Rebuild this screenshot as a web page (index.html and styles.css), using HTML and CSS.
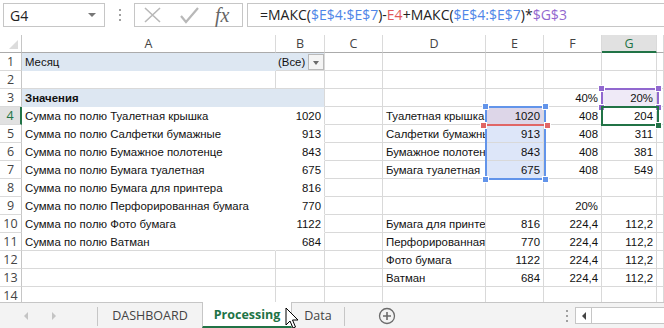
FILE: index.html
```html
<!DOCTYPE html>
<html lang="ru">
<head>
	<meta charset="UTF-8">
	<title>Processing</title>
	<link rel="stylesheet" href="styles.css">
</head>
<body>
	<div class="formula-bar">
		<div class="name-box"><span>G4</span><span class="caret"></span></div>
		<div class="grip"><i></i><i></i><i></i></div>
		<div class="fx-buttons">
			<svg class="btn-icon" width="36" height="22" viewBox="0 0 36 22"><path d="M10 4 L25 18 M25 4 L10 18" stroke="#b8b8b8" stroke-width="1.6" fill="none"/></svg>
			<svg class="btn-icon" width="36" height="22" viewBox="0 0 36 22"><path d="M10 12 L15 18 L27 4" stroke="#b8b8b8" stroke-width="2.2" fill="none"/></svg>
			<span class="fx">fx</span>
		</div>
		<div class="formula">=МАКС(<span class="ref-blue">$E$4:$E$7</span>)-<span class="ref-red">E4</span>+МАКС(<span class="ref-blue">$E$4:$E$7</span>)*<span class="ref-purple">$G$3</span></div>
	</div>

	<div class="sheet-area">
		<div class="sheet">
			<div class="c corner"></div>
			<div class="c ch">A</div><div class="c ch">B</div><div class="c ch">C</div><div class="c ch">D</div>
			<div class="c ch">E</div><div class="c ch">F</div><div class="c ch sel">G</div><div class="c ch"></div>

			<div class="c rh">1</div>
			<div class="c pa pvh">Месяц</div>
			<div class="c pvh filter"><span>(Все)</span><span class="drop"></span></div>
			<div class="c"></div><div class="c"></div><div class="c"></div><div class="c"></div><div class="c"></div><div class="c"></div>

			<div class="c rh">2</div>
			<div class="c"></div><div class="c"></div><div class="c"></div><div class="c"></div><div class="c"></div><div class="c"></div><div class="c"></div><div class="c"></div>

			<div class="c rh">3</div>
			<div class="c pa pvh bold">Значения</div>
			<div class="c pb pvh"></div>
			<div class="c"></div><div class="c"></div><div class="c"></div>
			<div class="c n">40%</div><div class="c n hl-purple">20%</div><div class="c"></div>

			<div class="c rh sel">4</div>
			<div class="c pa">Сумма по полю Туалетная крышка</div>
			<div class="c pb n">1020</div>
			<div class="c"></div><div class="c">Туалетная крышка</div>
			<div class="c n hl-mix">1020</div><div class="c n">408</div><div class="c n">204</div><div class="c"></div>

			<div class="c rh">5</div>
			<div class="c pa">Сумма по полю Салфетки бумажные</div>
			<div class="c pb n">913</div>
			<div class="c"></div><div class="c">Салфетки бумажные</div>
			<div class="c n hl-blue">913</div><div class="c n">408</div><div class="c n">311</div><div class="c"></div>

			<div class="c rh">6</div>
			<div class="c pa">Сумма по полю Бумажное полотенце</div>
			<div class="c pb n">843</div>
			<div class="c"></div><div class="c">Бумажное полотенце</div>
			<div class="c n hl-blue">843</div><div class="c n">408</div><div class="c n">381</div><div class="c"></div>

			<div class="c rh">7</div>
			<div class="c pa">Сумма по полю Бумага туалетная</div>
			<div class="c pb n">675</div>
			<div class="c"></div><div class="c">Бумага туалетная</div>
			<div class="c n hl-blue">675</div><div class="c n">408</div><div class="c n">549</div><div class="c"></div>

			<div class="c rh">8</div>
			<div class="c pa">Сумма по полю Бумага для принтера</div>
			<div class="c pb n">816</div>
			<div class="c"></div><div class="c"></div><div class="c"></div><div class="c"></div><div class="c"></div><div class="c"></div>

			<div class="c rh">9</div>
			<div class="c pa">Сумма по полю Перфорированная бумага</div>
			<div class="c pb n">770</div>
			<div class="c"></div><div class="c"></div><div class="c"></div>
			<div class="c n">20%</div><div class="c"></div><div class="c"></div>

			<div class="c rh">10</div>
			<div class="c pa">Сумма по полю Фото бумага</div>
			<div class="c pb n">1122</div>
			<div class="c"></div><div class="c">Бумага для принтера</div>
			<div class="c n">816</div><div class="c n">224,4</div><div class="c n">112,2</div><div class="c"></div>

			<div class="c rh">11</div>
			<div class="c pa last">Сумма по полю Ватман</div>
			<div class="c n">684</div>
			<div class="c"></div><div class="c">Перфорированная бумага</div>
			<div class="c n">770</div><div class="c n">224,4</div><div class="c n">112,2</div><div class="c"></div>

			<div class="c rh">12</div>
			<div class="c"></div><div class="c"></div><div class="c"></div><div class="c">Фото бумага</div>
			<div class="c n">1122</div><div class="c n">224,4</div><div class="c n">112,2</div><div class="c"></div>

			<div class="c rh">13</div>
			<div class="c"></div><div class="c"></div><div class="c"></div><div class="c">Ватман</div>
			<div class="c n">684</div><div class="c n">224,4</div><div class="c n">112,2</div><div class="c"></div>

			<div class="c rh">14</div>
			<div class="c"></div><div class="c"></div><div class="c"></div><div class="c"></div><div class="c"></div><div class="c"></div><div class="c"></div><div class="c"></div>
		</div>

		<!-- formula reference highlights and the active cell -->
		<div class="range range-blue">
			<span class="h tl"></span><span class="h tr"></span><span class="h bl"></span><span class="h br"></span>
		</div>
		<div class="range range-red">
			<span class="h bl"></span><span class="h br"></span>
		</div>
		<div class="range range-purple">
			<span class="h tl"></span><span class="h tr"></span><span class="h bl"></span><span class="h br"></span>
		</div>
		<div class="range active-cell"><span class="fill-handle"></span></div>
	</div>

	<div class="tabs">
		<div class="nav">
			<svg width="8" height="10" viewBox="0 0 8 10"><path d="M6 1 L2 5 L6 9 Z" fill="#c4c4c4"/></svg>
			<svg width="8" height="10" viewBox="0 0 8 10"><path d="M2 1 L6 5 L2 9 Z" fill="#c4c4c4"/></svg>
		</div>
		<div class="sep"></div>
		<div class="tab tab-dash">DASHBOARD</div>
		<div class="tab tab-active">Processing</div>
		<div class="tab tab-data">Data</div>
		<div class="sep"></div>
		<div class="add">
			<svg width="18" height="18" viewBox="0 0 18 18"><circle cx="9" cy="9" r="7.5" stroke="#6b6b6b" stroke-width="1.3" fill="none"/><path d="M9 5 V13 M5 9 H13" stroke="#6b6b6b" stroke-width="1.6"/></svg>
		</div>
		<div class="tabs-right">
			<div class="grip small"><i></i><i></i><i></i></div>
			<div class="hscroll"><span class="arrow-btn"><svg width="6" height="8" viewBox="0 0 6 8"><path d="M5 0 L1 4 L5 8 Z" fill="#444"/></svg></span></div>
		</div>
		<svg class="cursor" width="14" height="22" viewBox="0 0 14 22"><path d="M1 1 L1 18 L5 14 L8 21 L10.5 20 L7.5 13 L13 13 Z" fill="#fff" stroke="#000" stroke-width="1"/></svg>
	</div>
</body>
</html>
```

FILE: styles.css
```css
body {
	margin: 0;
	width: 664px;
	height: 328px;
	overflow: hidden;
	background: #fff;
	font-family: "Open Sans", "Noto Sans", sans-serif;
	color: #222;
}

/* formula bar */

.formula-bar {
	display: flex;
	height: 30px;
	padding: 3px 0 0 3px;
	box-sizing: border-box;
}

.name-box {
	width: 102px;
	height: 24px;
	box-sizing: border-box;
	border: 1px solid #c6c6c6;
	display: flex;
	align-items: center;
	justify-content: space-between;
	padding: 0 8px 0 6px;
	font-size: 14px;
}

.caret {
	width: 0;
	height: 0;
	border-left: 4px solid transparent;
	border-right: 4px solid transparent;
	border-top: 4px solid #777;
}

.grip {
	width: 29px;
	display: flex;
	flex-direction: column;
	align-items: center;
	justify-content: center;
	gap: 3px;
	height: 24px;
}

.grip i {
	width: 2px;
	height: 2px;
	background: #a0a0a0;
}

.fx-buttons {
	width: 109px;
	height: 24px;
	box-sizing: border-box;
	border: 1px solid #c6c6c6;
	display: flex;
	align-items: center;
	padding-left: 0;
}

.btn-icon {
	display: block;
}

.fx {
	font-family: "Liberation Serif", serif;
	font-style: italic;
	font-size: 20px;
	color: #666;
	margin-left: 8px;
	line-height: 20px;
}

.formula {
	flex: 1;
	height: 24px;
	box-sizing: border-box;
	margin-left: 4px;
	border: 1px solid #c6c6c6;
	border-right: none;
	padding-left: 12px;
	font-size: 14px;
	line-height: 22px;
	white-space: nowrap;
}

.ref-blue { color: #4f86e8; }
.ref-red { color: #e2595b; }
.ref-purple { color: #9168cf; }

/* sheet grid */

.sheet-area {
	position: relative;
	margin-top: 5px;
	height: 267px;
	overflow: hidden;
}

.sheet {
	display: grid;
	grid-template-columns: 22px 254px 49px 58px 103px 58px 58px 55px 7px;
	grid-auto-rows: 18px;
	font-family: "Liberation Sans", Arial, sans-serif;
	font-size: 11.4px;
	color: #111;
}

.c {
	box-sizing: border-box;
	border-right: 1px solid #d9d9d9;
	border-bottom: 1px solid #d9d9d9;
	padding: 0 3px;
	line-height: 18px;
	white-space: nowrap;
	overflow: hidden;
}

.n {
	text-align: right;
}

.bold {
	font-weight: bold;
}

.corner {
	position: relative;
	border-right-color: #c6c6c6;
	border-bottom-color: #ababab;
}

.corner::after {
	content: "";
	position: absolute;
	right: 3px;
	bottom: 3px;
	border-left: 9px solid transparent;
	border-bottom: 9px solid #dcdcdc;
}

.ch {
	text-align: center;
	color: #444;
	font-family: "Open Sans", "Noto Sans", sans-serif;
	font-size: 12.5px;
	border-bottom-color: #ababab;
	border-right-color: #dadada;
}

.ch.sel {
	background: #e1e1e1;
	color: #217346;
	border-bottom: 2px solid #217346;
}

.rh {
	text-align: center;
	color: #444;
	font-family: "Open Sans", "Noto Sans", sans-serif;
	font-size: 12.5px;
	padding: 0;
	border-right-color: #c6c6c6;
	border-bottom-color: #dadada;
}

.rh.sel {
	background: #e1e1e1;
	color: #217346;
	border-right: 2px solid #217346;
}

/* pivot table */

.pa {
	border-right-color: transparent;
	border-bottom-color: transparent;
}

.pa.last {
	border-bottom-color: #d9d9d9;
}

.pb {
	border-bottom-color: transparent;
}

.pvh {
	background: #dde7f2;
}

.filter {
	display: flex;
	align-items: center;
	justify-content: space-between;
	padding: 0 0 0 2px;
	overflow: visible;
}

.drop {
	width: 16px;
	height: 16px;
	box-sizing: border-box;
	border: 1px solid #b9b9b9;
	background: #f4f4f4;
	position: relative;
}

.drop::after {
	content: "";
	position: absolute;
	left: 4px;
	top: 6px;
	border-left: 3.5px solid transparent;
	border-right: 3.5px solid transparent;
	border-top: 4px solid #6a6a6a;
}

.hl-blue { background: #dde6f9; }
.hl-mix { background: #ddd6e8; }
.hl-purple { background: #efeaf7; }

/* highlight frames */

.range {
	position: absolute;
	box-sizing: border-box;
}

.range-blue {
	left: 485px;
	top: 71px;
	width: 61px;
	height: 74px;
	border: 2px solid #6294ea;
}

.range-red {
	left: 485px;
	top: 71px;
	width: 61px;
	height: 20px;
	border-bottom: 2px solid #e06666;
}

.range-purple {
	left: 601px;
	top: 53px;
	width: 58px;
	height: 20px;
	border: 2px solid #9168cf;
}

.active-cell {
	left: 601px;
	top: 71px;
	width: 58px;
	height: 20px;
	border: 2px solid #217346;
}

.h {
	position: absolute;
	width: 5px;
	height: 5px;
	background: currentColor;
	border: 1px solid #fff;
}

.range-blue .h { color: #6294ea; }
.range-red .h { color: #e06666; }
.range-purple .h { color: #9168cf; }

.tl { left: -5px; top: -5px; }
.tr { right: -5px; top: -5px; }
.bl { left: -5px; bottom: -5px; }
.br { right: -5px; bottom: -5px; }

.fill-handle {
	position: absolute;
	right: -5px;
	bottom: -5px;
	width: 5px;
	height: 5px;
	background: #217346;
	border: 1px solid #fff;
}

/* sheet tabs */

.tabs {
	position: relative;
	display: flex;
	align-items: stretch;
	height: 26px;
	box-sizing: border-box;
	border-top: 1px solid #c6c6c6;
	background: #f3f3f3;
	font-family: "Open Sans", "Noto Sans", sans-serif;
	font-size: 12.5px;
	color: #444;
}

.nav {
	width: 97px;
	display: flex;
	align-items: center;
	gap: 20px;
	padding-left: 22px;
	box-sizing: border-box;
}

.nav svg {
	display: block;
}

.sep {
	width: 1px;
	margin: 4px 0 2px;
	background: #c6c6c6;
}

.tab {
	display: flex;
	align-items: center;
	justify-content: center;
	box-sizing: border-box;
}

.tab-dash {
	width: 104px;
}

.tab-active {
	width: 90px;
	margin-top: -1px;
	background: #fff;
	border-left: 1px solid #c6c6c6;
	border-right: 1px solid #c6c6c6;
	border-bottom: 2px solid #217346;
	color: #217346;
	font-weight: bold;
}

.tab-data {
	width: 52px;
}

.add {
	width: 84px;
	display: flex;
	align-items: center;
	justify-content: center;
}

.add svg {
	display: block;
}

.tabs-right {
	margin-left: auto;
	display: flex;
	align-items: center;
}

.grip.small {
	width: 16px;
	height: 16px;
}

.hscroll {
	width: 89px;
	height: 17px;
	box-sizing: border-box;
	border: 1px solid #c6c6c6;
	border-right: none;
	background: #fff;
	display: flex;
}

.arrow-btn {
	width: 15px;
	border-right: 1px solid #c6c6c6;
	display: flex;
	align-items: center;
	justify-content: center;
}

.cursor {
	position: absolute;
	left: 285px;
	top: 4px;
}
```
